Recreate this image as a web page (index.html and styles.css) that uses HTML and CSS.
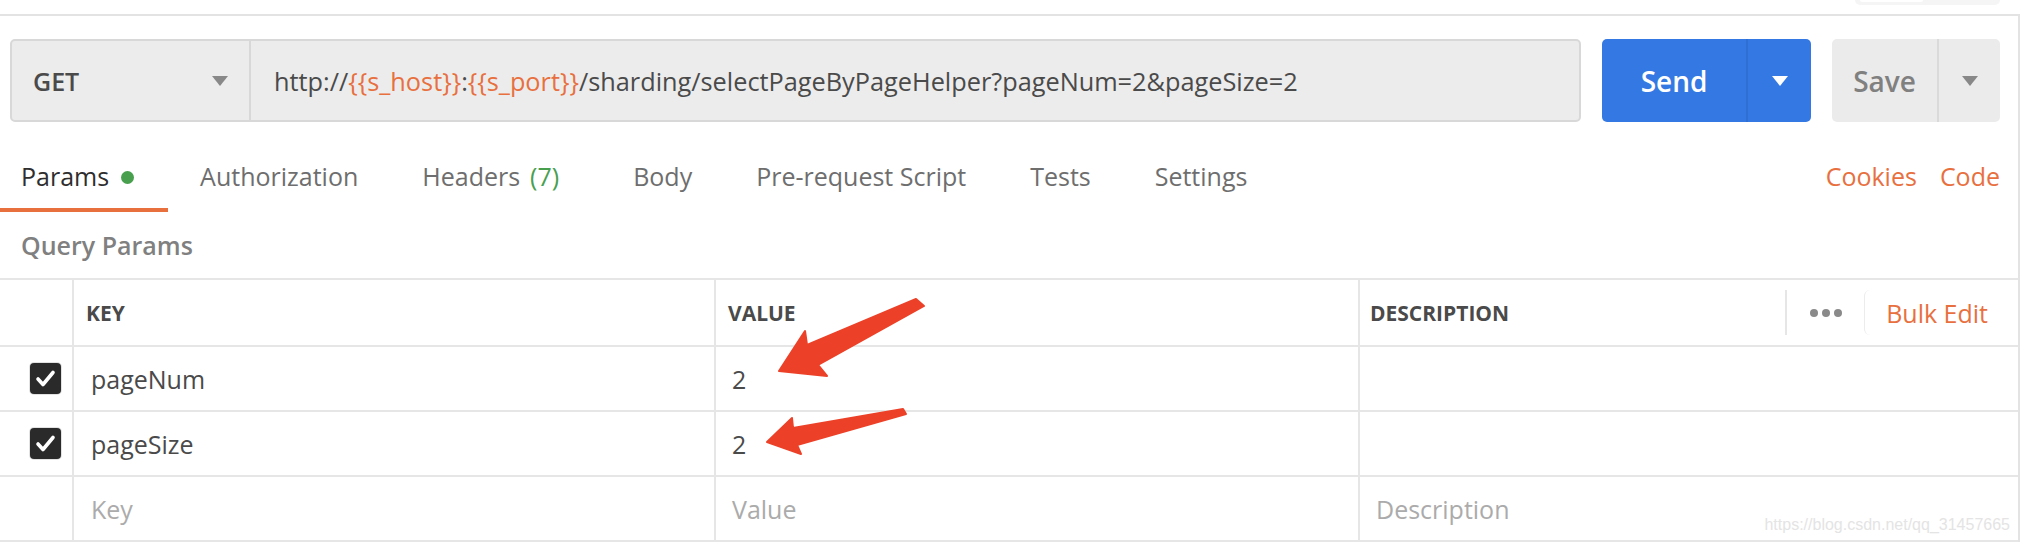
FILE: index.html
```html
<!DOCTYPE html>
<html lang="en">
<head>
  <meta charset="UTF-8" />
  <title>Postman – Params</title>
  <link rel="stylesheet" href="styles.css">
</head>
<body>
  <div class="app">
    <div class="top-strip">
      <div class="env-box"><span></span></div>
    </div>

    <div class="pane">
      <div class="request-bar">
        <div class="url-group">
          <div class="method">
            <span>GET</span>
            <svg class="caret" width="16" height="10" viewBox="0 0 16 10"><polygon points="0,0 16,0 8,10" /></svg>
          </div>
          <div class="url">http://<span class="var">{{s_host}}</span>:<span class="var">{{s_port}}</span>/sharding/selectPageByPageHelper?pageNum=2&amp;pageSize=2</div>
        </div>
        <div class="split-btn send">
          <span class="btn-label">Send</span>
          <span class="btn-caret"><svg width="16" height="10" viewBox="0 0 16 10"><polygon points="0,0 16,0 8,10" /></svg></span>
        </div>
        <div class="split-btn save">
          <span class="btn-label">Save</span>
          <span class="btn-caret"><svg width="16" height="10" viewBox="0 0 16 10"><polygon points="0,0 16,0 8,10" /></svg></span>
        </div>
      </div>

      <nav class="tabs">
        <div class="tab active">Params <span class="dot"></span></div>
        <div class="tab">Authorization</div>
        <div class="tab headers">Headers <span class="count">(7)</span></div>
        <div class="tab">Body</div>
        <div class="tab">Pre-request Script</div>
        <div class="tab">Tests</div>
        <div class="tab">Settings</div>
        <div class="tab-links">
          <span>Cookies</span>
          <span>Code</span>
        </div>
      </nav>

      <div class="section-title">Query Params</div>

      <div class="params-table">
        <div class="row head">
          <div class="cell check"></div>
          <div class="cell">Key</div>
          <div class="cell">Value</div>
          <div class="cell desc-head">
            <span>Description</span>
            <div class="head-actions">
              <span class="sep"></span>
              <span class="dots"><i></i><i></i><i></i></span>
              <span class="bulk">Bulk Edit</span>
            </div>
          </div>
        </div>
        <div class="row">
          <div class="cell check"><span class="checkbox"><svg width="31" height="31" viewBox="0 0 31 31"><polyline points="8,16 13,21.5 23,9.5" /></svg></span></div>
          <div class="cell key">pageNum</div>
          <div class="cell">2</div>
          <div class="cell"></div>
        </div>
        <div class="row">
          <div class="cell check"><span class="checkbox"><svg width="31" height="31" viewBox="0 0 31 31"><polyline points="8,16 13,21.5 23,9.5" /></svg></span></div>
          <div class="cell key">pageSize</div>
          <div class="cell">2</div>
          <div class="cell"></div>
        </div>
        <div class="row">
          <div class="cell check"></div>
          <div class="cell key placeholder">Key</div>
          <div class="cell placeholder">Value</div>
          <div class="cell placeholder">Description</div>
        </div>
      </div>
    </div>

    <!-- red annotation arrows drawn on top of the screenshot -->
    <svg class="annotations" width="2020" height="542" viewBox="0 0 2020 542">
      <path d="M916,299 L924,306 L818,365 L827,376 L779,371 L805,331 L807,345 Z" />
      <path d="M903,409 L906,414 L797,445 L801,454 L767,442 L792,418 L793,428 Z" />
    </svg>

    <div class="watermark">https://blog.csdn.net/qq_31457665</div>
  </div>
</body>
</html>
```

FILE: styles.css
```css
:root {
  --text: #505050;
  --muted: #808080;
  --line: #e6e6e6;
  --orange: #e8703f;
  --green: #48a04f;
  --blue: #3479e3;
}

body {
  margin: 0;
  background: #ffffff;
  font-family: "Open Sans", "Noto Sans", sans-serif;
  color: var(--text);
}

.app {
  position: relative;
  width: 2020px;
  height: 542px;
  overflow: hidden;
}

.top-strip {
  height: 14px;
  border-bottom: 2px solid #e3e3e3;
  display: flex;
  justify-content: flex-end;
  padding-right: 20px;
}

.env-box {
  width: 145px;
  height: 5px;
  background: #f5f5f5;
  border-radius: 0 0 6px 6px;
  padding-left: 5px;
  box-sizing: border-box;
}

.env-box span {
  display: block;
  width: 63px;
  height: 2px;
  background: #ffffff;
  border-radius: 0 0 3px 3px;
}

.pane {
  height: 526px;
  border-right: 2px solid #e3e3e3;
}

/* request bar */
.request-bar {
  display: flex;
  height: 83px;
  padding: 23px 18px 0 10px;
}

.url-group {
  flex: 1;
  display: flex;
  background: #ececec;
  border: 2px solid #d8d8d8;
  border-radius: 5px;
  margin-right: 21px;
}

.method {
  width: 239px;
  box-sizing: border-box;
  border-right: 2px solid #d8d8d8;
  display: flex;
  align-items: center;
  justify-content: space-between;
  padding: 0 21px 0 21px;
  font-size: 25px;
  font-weight: 600;
  color: #4a4a4a;
}

.caret polygon { fill: #888888; }

.url {
  display: flex;
  align-items: center;
  padding-left: 23px;
  font-size: 25.3px;
  color: #4a4a4a;
  white-space: pre;
}

.url .var { color: var(--orange); }

.split-btn {
  display: flex;
  border-radius: 5px;
  font-size: 28px;
  font-weight: 600;
}

.split-btn .btn-label,
.split-btn .btn-caret {
  display: flex;
  align-items: center;
  justify-content: center;
}

.send {
  width: 209px;
  background: var(--blue);
  color: #ffffff;
}

.send .btn-label { width: 144px; }
.send .btn-caret { flex: 1; border-left: 2px solid #2f6fd4; }
.send .btn-caret polygon { fill: #ffffff; }

.save {
  width: 168px;
  margin-left: 21px;
  background: #ebebeb;
  color: var(--muted);
}

.save .btn-label { width: 105px; }
.save .btn-caret { flex: 1; border-left: 2px solid #dadada; }
.save .btn-caret polygon { fill: #888888; }

/* tabs */
.tabs {
  display: flex;
  height: 90px;
}

.tab {
  padding: 36px 32px 14px;
  line-height: 36px;
  font-size: 25px;
  color: #6e6e6e;
  border-bottom: 4px solid transparent;
  white-space: nowrap;
  display: flex;
  align-items: center;
}

.tab:first-child { padding-left: 21px; padding-right: 34px; }
.tab.headers { padding-right: 42px; }

.tab.active {
  color: #2e2e2e;
  border-bottom-color: var(--orange);
}

.tab .dot {
  width: 13px;
  height: 13px;
  border-radius: 50%;
  background: var(--green);
  margin-left: 12px;
  margin-top: 3px;
}

.tab .count {
  color: var(--green);
  margin-left: 10px;
}

.tab-links {
  margin-left: auto;
  display: flex;
  gap: 23px;
  padding: 36px 18px 0 0;
  line-height: 36px;
  font-size: 25px;
  color: var(--orange);
}

.section-title {
  margin: 16px 0 16px 21px;
  line-height: 34px;
  font-size: 25px;
  font-weight: 600;
  color: var(--muted);
}

/* params table */
.params-table {
  border-top: 2px solid var(--line);
}

.row {
  display: grid;
  grid-template-columns: 74px 642px 644px 1fr;
  height: 65px;
  border-bottom: 2px solid var(--line);
  box-sizing: border-box;
}

.row.head { height: 67px; }

.cell {
  display: flex;
  align-items: center;
  padding-left: 16px;
  font-size: 25px;
  color: #4a4a4a;
  border-right: 2px solid var(--line);
}

.cell:last-child { border-right: none; }
.cell.key { padding-left: 17px; }
.cell.check { padding-left: 30px; }

.placeholder { color: #ababab; }

.head .cell {
  padding-left: 12px;
  font-size: 21px;
  font-weight: 700;
  text-transform: uppercase;
  color: #4a4a4a;
}

.head .cell.desc-head {
  padding-left: 10px;
  padding-right: 30px;
  justify-content: space-between;
}

.head-actions {
  display: flex;
  align-items: center;
  height: 45px;
}

.head-actions .sep {
  width: 2px;
  height: 45px;
  background: #e6e6e6;
  margin-right: 23px;
}

.dots {
  display: flex;
  gap: 4px;
  margin-right: 22px;
}

.dots i {
  width: 8px;
  height: 8px;
  border-radius: 50%;
  background: #8a8a8a;
}

.bulk {
  height: 45px;
  display: flex;
  align-items: center;
  padding-left: 21px;
  border-left: 1px solid #ececec;
  border-radius: 6px 0 0 6px;
  font-size: 25px;
  font-weight: 400;
  text-transform: none;
  color: var(--orange);
}

.checkbox {
  width: 31px;
  height: 31px;
  border-radius: 4px;
  background: #2a2a2a;
  box-shadow: 0 0 0 1px #e2e2e2;
  display: block;
}

.checkbox polyline {
  fill: none;
  stroke: #ffffff;
  stroke-width: 3.6;
  stroke-linecap: round;
  stroke-linejoin: round;
}

.annotations {
  position: absolute;
  top: 0;
  left: 0;
  pointer-events: none;
}

.annotations path {
  fill: #ec4128;
  stroke: #ec4128;
  stroke-width: 2;
  stroke-linejoin: round;
}

.watermark {
  position: absolute;
  right: 10px;
  bottom: 8px;
  font-family: "Liberation Sans", Arial, sans-serif;
  font-size: 16px;
  color: #e4e4e4;
}
```
